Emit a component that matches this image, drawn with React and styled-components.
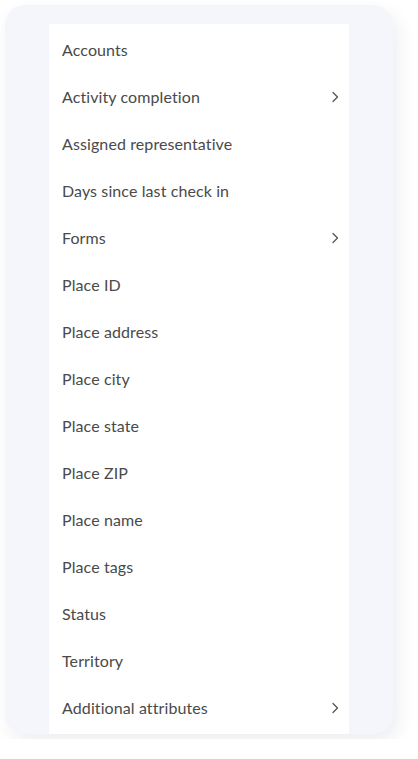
import React from 'react';
import styled, { createGlobalStyle } from 'styled-components';

const GlobalStyle = createGlobalStyle`
  html, body {
    margin: 0;
    padding: 0;
    background: #ffffff;
  }
  body {
    font-family: Lato, "Open Sans", sans-serif;
  }
`;

const Page = styled.div`
  padding: 5px;
`;

const Card = styled.div`
  width: 388px;
  height: 729px;
  box-sizing: border-box;
  padding: 19px 44px 0 44px;
  background: #f5f6fb;
  border-radius: 20px;
  box-shadow: 5px 8px 18px rgba(30, 40, 80, 0.08);
  display: flex;
  overflow: hidden;
`;

const Menu = styled.ul`
  list-style: none;
  margin: 0;
  padding: 2px 0 3px;
  width: 300px;
  background: #ffffff;
  display: flex;
  flex-direction: column;
`;

const Item = styled.li`
  height: 47px;
  display: flex;
  align-items: center;
  justify-content: space-between;
  padding: 0 10px 0 13px;
  font-size: 16px;
  line-height: 20px;
  letter-spacing: 0.1px;
  color: #4a4a4a;
  cursor: pointer;
`;

const Chevron = () => (
  <svg width="8" height="12" viewBox="0 0 8 12" fill="none">
    <path d="M2 1.5 L6.5 6 L2 10.5" stroke="#555" strokeWidth="1.3" strokeLinecap="round" strokeLinejoin="round" />
  </svg>
);

const items = [
  { label: 'Accounts' },
  { label: 'Activity completion', sub: true },
  { label: 'Assigned representative' },
  { label: 'Days since last check in' },
  { label: 'Forms', sub: true },
  { label: 'Place ID' },
  { label: 'Place address' },
  { label: 'Place city' },
  { label: 'Place state' },
  { label: 'Place ZIP' },
  { label: 'Place name' },
  { label: 'Place tags' },
  { label: 'Status' },
  { label: 'Territory' },
  { label: 'Additional attributes', sub: true },
];

export default function App() {
  return (
    <Page>
      <GlobalStyle />
      <Card>
        <Menu>
          {items.map(item => (
            <Item key={item.label}>
              <span>{item.label}</span>
              {item.sub ? <Chevron /> : null}
            </Item>
          ))}
        </Menu>
      </Card>
    </Page>
  );
}
